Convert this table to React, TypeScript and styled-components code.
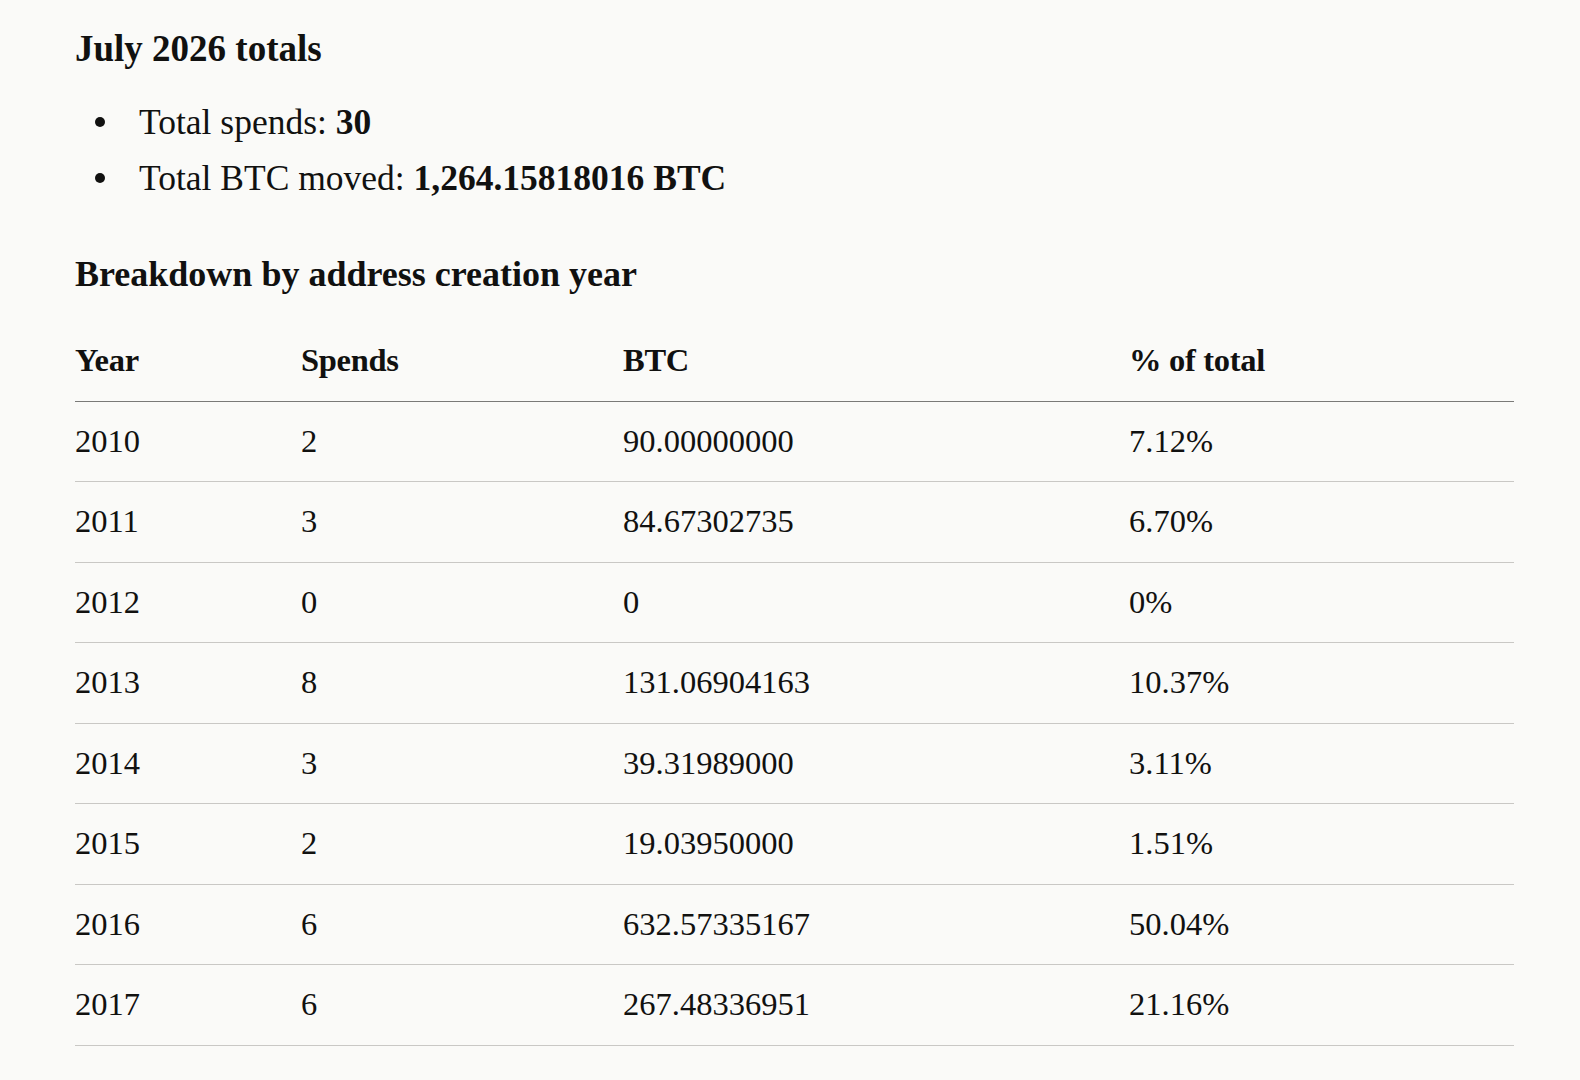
import React from "react";
import styled, { createGlobalStyle } from "styled-components";

const Global = createGlobalStyle`
  html, body {
    margin: 0;
    padding: 0;
    background: #fafaf8;
  }
  body {
    font-family: "Liberation Serif", "Times New Roman", serif;
    color: #111110;
    -webkit-font-smoothing: antialiased;
  }
`;

const Article = styled.article`
  width: 1439px;
  padding: 0 66px 40px 75px;
  overflow: hidden;
`;

const Heading = styled.h3<{ $top: number; $size: number }>`
  margin: ${(p) => p.$top}px 0 0;
  font-size: ${(p) => p.$size}px;
  line-height: 46px;
  font-weight: 700;
  letter-spacing: 0;
`;

const List = styled.ul`
  list-style: none;
  margin: 22px 0 0;
  padding: 0;
`;

const Item = styled.li`
  position: relative;
  padding-left: 64px;
  font-size: 35.5px;
  line-height: 56px;
  letter-spacing: 0;

  &::before {
    content: "";
    position: absolute;
    left: 20px;
    top: 23px;
    width: 10px;
    height: 10px;
    border-radius: 50%;
    background: #111110;
  }
`;

const Strong = styled.strong`
  font-weight: 700;
`;

const Table = styled.table`
  margin-top: 24px;
  width: 1439px;
  border-collapse: collapse;
  table-layout: fixed;
`;

const Col = styled.col<{ $w?: number }>`
  width: ${(p) => (p.$w ? `${p.$w}px` : "auto")};
`;

const HeadCell = styled.th`
  text-align: left;
  font-weight: 700;
  font-size: 32.5px;
  height: 80px;
  padding: 0;
  box-sizing: border-box;
  vertical-align: middle;
  border-bottom: 1px solid #7a7a78;
  letter-spacing: -0.3px;
`;

const Cell = styled.td`
  text-align: left;
  font-size: 32.5px;
  height: 80.5px;
  padding: 0;
  box-sizing: border-box;
  vertical-align: middle;
  border-bottom: 1px solid #c9c8c5;
  letter-spacing: 0;
`;

const rows: [string, string, string, string][] = [
  ["2010", "2", "90.00000000", "7.12%"],
  ["2011", "3", "84.67302735", "6.70%"],
  ["2012", "0", "0", "0%"],
  ["2013", "8", "131.06904163", "10.37%"],
  ["2014", "3", "39.31989000", "3.11%"],
  ["2015", "2", "19.03950000", "1.51%"],
  ["2016", "6", "632.57335167", "50.04%"],
  ["2017", "6", "267.48336951", "21.16%"],
];

export default function App() {
  return (
    <>
      <Global />
      <Article>
        <Heading $top={26} $size={37}>July 2026 totals</Heading>
        <List>
          <Item>
            Total spends: <Strong>30</Strong>
          </Item>
          <Item>
            Total BTC moved: <Strong>1,264.15818016 BTC</Strong>
          </Item>
        </List>
        <Heading $top={45} $size={36}>Breakdown by address creation year</Heading>
        <Table>
          <colgroup>
            <Col $w={226} />
            <Col $w={322} />
            <Col $w={506} />
            <Col />
          </colgroup>
          <thead>
            <tr>
              <HeadCell>Year</HeadCell>
              <HeadCell>Spends</HeadCell>
              <HeadCell>BTC</HeadCell>
              <HeadCell>% of total</HeadCell>
            </tr>
          </thead>
          <tbody>
            {rows.map((r) => (
              <tr key={r[0]}>
                {r.map((c, i) => (
                  <Cell key={i}>{c}</Cell>
                ))}
              </tr>
            ))}
          </tbody>
        </Table>
      </Article>
    </>
  );
}
